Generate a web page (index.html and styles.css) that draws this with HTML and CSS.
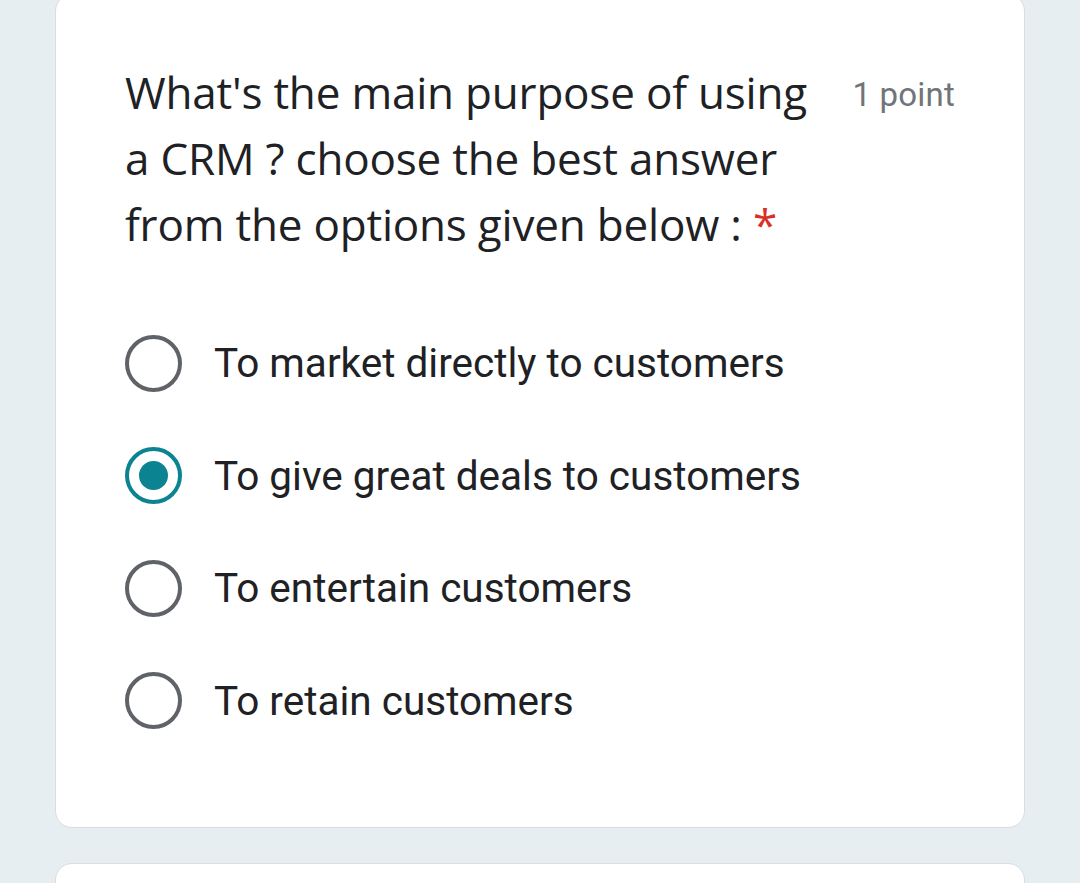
FILE: index.html
```html
<!DOCTYPE html>
<html lang="en">
<head>
<meta charset="utf-8">
<title>Question</title>
<link rel="stylesheet" href="styles.css">
</head>
<body>
<div class="page">
  <div class="card">
    <div class="header">
      <div class="title">What's the main purpose of using a CRM ? choose the best answer from the options given below :&nbsp;<span class="req">*</span></div>
      <div class="points">1 point</div>
    </div>
    <div class="options">
      <div class="option"><span class="radio"></span><span class="label">To market directly to customers</span></div>
      <div class="option"><span class="radio checked"></span><span class="label">To give great deals to customers</span></div>
      <div class="option"><span class="radio"></span><span class="label">To entertain customers</span></div>
      <div class="option"><span class="radio"></span><span class="label">To retain customers</span></div>
    </div>
  </div>
  <div class="card next"></div>
</div>
</body>
</html>
```
FILE: styles.css
```css
html, body {
  margin: 0;
  padding: 0;
  background: #e7eef1;
  height: 100%;
  overflow: hidden;
}
.page {
  padding: 0 55px;
  margin-top: -6px;
  display: flex;
  flex-direction: column;
  gap: 35px;
}
.card {
  background: #fff;
  border: 1px solid #dadce0;
  border-radius: 17px;
  padding: 64px 69px 70px 69px;
  box-sizing: border-box;
  height: 834px;
}
.card.next {
  height: 200px;
  flex: none;
}
.header {
  display: flex;
  align-items: flex-start;
  justify-content: space-between;
}
.title {
  font-family: "Open Sans", sans-serif;
  font-size: 44px;
  line-height: 66px;
  color: #202124;
  width: 700px;
  letter-spacing: -0.2px;
}
.req {
  color: #d93025;
}
.points {
  font-family: Roboto, sans-serif;
  font-size: 33px;
  letter-spacing: 0.2px;
  color: #70757a;
  margin-top: 16px;
  white-space: nowrap;
}
.options {
  margin-top: 50px;
  display: flex;
  flex-direction: column;
}
.option {
  height: 112.5px;
  display: flex;
  align-items: center;
  gap: 32px;
}
.radio {
  width: 57px;
  height: 57px;
  box-sizing: border-box;
  border: 4.5px solid #5f6368;
  border-radius: 50%;
  flex: none;
  display: flex;
  align-items: center;
  justify-content: center;
}
.radio.checked {
  border-color: #0c8390;
}
.radio.checked::after {
  content: "";
  width: 29px;
  height: 29px;
  border-radius: 50%;
  background: #0c8390;
}
.label {
  font-family: Roboto, sans-serif;
  font-size: 40.5px;
  color: #202124;
}
```
